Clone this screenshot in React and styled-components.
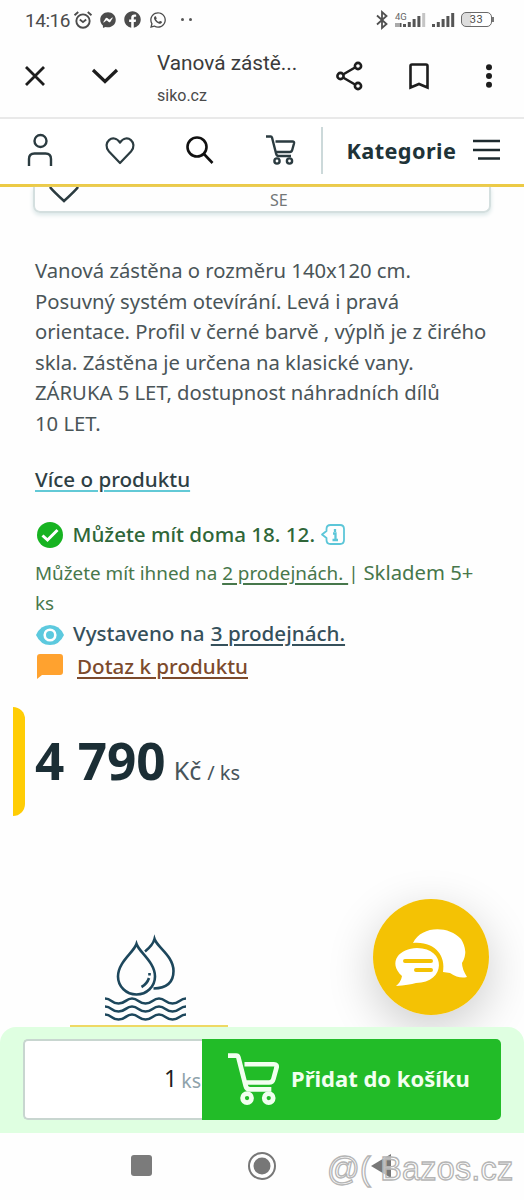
import styled, { createGlobalStyle } from "styled-components";
import { FaFacebook, FaFacebookMessenger, FaWhatsapp } from "react-icons/fa";

const GlobalStyle = createGlobalStyle`
  * {
    box-sizing: border-box;
  }
  body {
    margin: 0;
    background: #fff;
    font-family: "Noto Sans", sans-serif;
  }
`;

const Page = styled.main`
  position: relative;
  display: flex;
  flex-direction: column;
  width: 524px;
  height: 1200px;
  overflow: hidden;
  background: #fefefe;
  > * {
    flex: none;
  }
`;

const Icon = styled.svg`
  display: block;
  flex: none;
  overflow: visible;
  fill: none;
  stroke: ${(p) => p.$color || "#2b3b40"};
  stroke-width: ${(p) => p.$stroke || 2.4};
  margin-left: ${(p) => p.$ml || 0}px;
`;

/* status bar */
const StatusBar = styled.header`
  display: flex;
  align-items: center;
  height: 39px;
  padding-left: 25px;
  color: #4c4c4c;
  font-family: Roboto, sans-serif;
`;

const Clock = styled.span`
  width: 49px;
  font-size: 19px;
  letter-spacing: -0.45px;
  line-height: 39px;
  padding-top: 1px;
`;

const AppIcons = styled.div`
  display: flex;
  align-items: center;
  gap: 8px;
  font-size: 17px;
`;

const Dots = styled.span`
  display: flex;
  gap: 5px;
  margin-left: 6px;
  &::before,
  &::after {
    content: "";
    width: 3px;
    height: 3px;
    border-radius: 50%;
    background: #555;
  }
`;

const StatusRight = styled.div`
  display: flex;
  align-items: center;
  margin-left: 184px;
`;

const Battery = styled.span`
  display: flex;
  align-items: center;
  margin-left: 6px;
  &::after {
    content: "";
    width: 2px;
    height: 5px;
    background: #777;
  }
`;

const BatteryBody = styled.span`
  width: 31px;
  height: 15px;
  border: 1.5px solid #6a6a6a;
  border-radius: 5px;
  background: linear-gradient(90deg, #ddd 30%, #fff 30%);
  font-size: 11px;
  line-height: 13px;
  text-align: center;
  letter-spacing: 0.5px;
`;

/* browser toolbar */
const BrowserBar = styled.nav`
  display: flex;
  align-items: center;
  height: 80px;
  padding: 0 0 4px 25px;
  border-bottom: 2px solid #e9e9e9;
  font-family: Roboto, sans-serif;
`;

const PageInfo = styled.div`
  flex: none;
  width: 141px;
  margin-left: 39px;
  padding-top: 4px;
  color: #3b3b3b;
  white-space: nowrap;
`;

const PageTitle = styled.div`
  font-size: 20.8px;
  line-height: 30px;
`;

const PageHost = styled.div`
  padding-top: 5px;
  font-size: 16px;
  line-height: 26px;
  color: #4a4a4a;
`;

/* shop header */
const ShopBar = styled.nav`
  display: flex;
  align-items: center;
  height: 68px;
  padding: 0 0 3px 27px;
  border-bottom: 3px solid #ecca45;
  background: #fff;
`;

const Divider = styled.span`
  flex: none;
  width: 1.5px;
  height: 47px;
  margin-left: 25px;
  background: #ccd9da;
`;

const MenuLabel = styled.span`
  flex: none;
  width: 150px;
  padding-left: 24px;
  color: #203338;
  font-size: 21.7px;
  font-weight: 700;
  letter-spacing: 0.4px;
`;

const Variant = styled.div`
  display: flex;
  height: 26px;
  margin: 0 33px;
  border: 2px solid #d4dfdf;
  border-top: 0;
  border-radius: 0 0 7px 7px;
  box-shadow: 0 2px 4px #d9e6e7;
  overflow: hidden;
`;

const VariantName = styled.span`
  margin-left: 192px;
  color: #727677;
  font-size: 16px;
  line-height: 26px;
`;

/* product */
const Product = styled.section`
  height: 470.6px;
  padding: 42px 0 0 35px;
`;

const Description = styled.p`
  margin: 0;
  color: #4a5558;
  font-size: 20.25px;
  line-height: 30.6px;
  white-space: nowrap;
`;

const MoreLink = styled.a`
  display: block;
  margin-top: 25px;
  color: #2e3f44;
  font-size: 20.6px;
  font-weight: 500;
  line-height: 30px;
  text-decoration: underline #62c9d6 2px;
  text-underline-offset: 3px;
`;

const InfoRow = styled.div`
  display: flex;
  align-items: center;
  height: 32px;
  margin-top: ${(p) => p.$mt || 0}px;
  color: ${(p) => p.$color};
  font-size: 20.6px;
  font-weight: 500;
  white-space: pre;
`;

const InfoText = styled.span`
  margin-left: ${(p) => p.$ml}px;
  padding-bottom: ${(p) => p.$lift || 0}px;
`;

const Link = styled.a`
  margin-left: ${(p) => p.$ml || 0}px;
  text-decoration: underline 1.5px;
  text-underline-offset: 3px;
`;

const Stock = styled.p`
  height: 61px;
  margin: 7px 0 0;
  color: #47774b;
  font-size: 18.85px;
  line-height: 30.5px;
  big {
    font-size: 20.3px;
    line-height: 1;
  }
`;

const PriceBox = styled.div`
  display: flex;
  align-items: baseline;
  width: 300px;
  height: 109px;
  margin: 23px 0 0 13px;
  color: #1b2e35;
  white-space: pre;
`;

const PriceMark = styled.span`
  align-self: stretch;
  width: 12px;
  margin-right: 10px;
  border-radius: 0 12px 12px 0;
  background: #ffcd05;
`;

const Amount = styled.strong`
  font-size: 51.3px;
  line-height: 107px;
`;

const Unit = styled.span`
  margin-left: ${(p) => p.$ml}px;
  font-size: ${(p) => p.$size}px;
  color: #48545a;
`;

const Feature = styled.div`
  width: 158px;
  height: 92px;
  margin: 119.4px 0 0 70px;
  padding: 2px 0 0 34px;
  border-bottom: 2px solid #eed964;
`;

/* bottom bars */
const BuyBar = styled.div`
  display: flex;
  height: 106px;
  padding: 12px 23px 13px;
  border-radius: 16px 16px 0 0;
  background: #dfffe1;
`;

const Quantity = styled.div`
  display: flex;
  justify-content: flex-end;
  align-items: center;
  width: 179px;
  padding: 0 1px 2px 0;
  border: 2px solid #c8d6d0;
  border-right: 0;
  border-radius: 5px 0 0 5px;
  background: #fff;
  color: #1f1f1f;
  font-size: 23px;
  span {
    margin-left: 4px;
    padding-top: 4px;
    color: #8fa3ab;
    font-size: 19.5px;
  }
`;

const BuyButton = styled.button`
  display: flex;
  align-items: center;
  width: 299px;
  padding: 0 0 0 26px;
  border: 0;
  border-radius: 0 5px 5px 0;
  background: #22bc28;
  color: #f2fff0;
  font: 700 22px "Noto Sans", sans-serif;
  white-space: nowrap;
  span {
    margin-left: 11px;
    padding-bottom: 2px;
  }
`;

const SystemNav = styled.nav`
  display: flex;
  align-items: center;
  height: 67px;
  padding: 0 0 1px 131px;
  background: #fefefe;
`;

const ChatButton = styled.button`
  position: absolute;
  left: 373px;
  top: 899px;
  width: 116px;
  height: 116px;
  padding: 0;
  border: 0;
  border-radius: 50%;
  background: #f4c204;
`;

const ChatShadow = styled.div`
  position: absolute;
  left: 373px;
  top: 899px;
  width: 116px;
  height: 116px;
  border-radius: 50%;
  box-shadow: 0 14px 48px rgba(0, 0, 0, 0.2);
`;

const Bottom = styled.div`
  position: relative;
`;

const Watermark = styled.span`
  position: absolute;
  left: 327px;
  top: 1151px;
  color: rgba(255, 255, 255, 0.55);
  font: 32.3px/36px "Liberation Sans", sans-serif;
  letter-spacing: 0.25px;
  white-space: nowrap;
  -webkit-text-stroke: 1.3px #b5b5b5;
`;

const Cart = ({ size, ...props }) => (
  <Icon width={size} height={size} viewBox="0 0 30 30" strokeLinejoin="round" {...props}>
    <path d="M0 1.500h4.700q1 0 1.300 1l4.200 16.500q.5 2 2.500 2H25M9.500 6.500h17q2 0 1.500 2l-1.800 6.500q-.5 2-2.500 2H10.500" />
    <circle cx="11" cy="26" r="2.600" />
    <circle cx="23.500" cy="26" r="2.600" />
  </Icon>
);

const Signal = ({ ml, weak }) => (
  <Icon width="23" height="15" $ml={ml} $stroke="3">
    {[3, 5, 8, 11, 14].map((h, i) => (
      <path key={h} d={`M${1.5 + i * 4.8} 15v-${h}`} stroke={weak && i === 4 ? "#c5c5c5" : "#555"} />
    ))}
  </Icon>
);

const App = () => {
  return (
    <>
      <GlobalStyle />
      <Page>
        <StatusBar>
          <Clock>14:16</Clock>
          <AppIcons>
            <Icon width="18" height="18" viewBox="0 0 17 17" $color="#4c4c4c" $stroke="1.8">
              <circle cx="8.500" cy="9.500" r="6.300" />
              <path d="M.5 4 4 1M16.500 4 13 1M5.500 8l3 2.500 3-2.500" />
            </Icon>
            <FaFacebookMessenger size={16} />
            <FaFacebook />
            <FaWhatsapp size={18} />
            <Dots />
          </AppIcons>
          <StatusRight>
            <Icon width="12" height="18" $color="#505050" $stroke="1.8">
              <path d="M1 4.500 10.500 13 6 17V1l4.500 4L1 13.500" />
            </Icon>
            <Icon width="14" height="18" $ml="7" $stroke="0">
              <text x="0" y="9" fill="#666" fontSize="9.500" fontFamily="Roboto">4G</text>
              <path d="M0 12h4v4H0z" fill="#aaa" />
              <path d="M4.500 12h2v4h-2z" fill="#555" />
            </Icon>
            <Signal ml={-6} weak />
            <Signal ml={6} />
            <Battery>
              <BatteryBody>33</BatteryBody>
            </Battery>
          </StatusRight>
        </StatusBar>

        <BrowserBar>
          <Icon width="20" height="20" $color="#1d1d1d" $stroke="2.800">
            <path d="M1 1l18 18M19 1 1 19" />
          </Icon>
          <Icon width="26" height="14" $ml="47" $color="#1d1d1d" $stroke="3.2">
            <path d="M1 1l12 11.500L25 1" />
          </Icon>
          <PageInfo>
            <PageTitle>Vanová zástě...</PageTitle>
            <PageHost>siko.cz</PageHost>
          </PageInfo>
          <Icon width="26" height="28" $ml="38" $color="#1d1d1d" $stroke="2.6">
            <path d="M7 12.500 19 5.500M7 15.500l12 7" />
            <circle cx="4.500" cy="14" r="3.100" />
            <circle cx="22" cy="4" r="3.100" />
            <circle cx="22" cy="24" r="3.100" />
          </Icon>
          <Icon width="20" height="26" $ml="47" $color="#1d1d1d" $stroke="2.600">
            <path d="M1.500 24.500V3q0-1.500 1.500-1.500h14q1.500 0 1.500 1.500v21.500L10 21z" />
          </Icon>
          <Icon width="6" height="24" $ml="57" $stroke="0">
            <g fill="#1d1d1d">
              <circle cx="3" cy="3.200" r="3" />
              <circle cx="3" cy="12" r="3" />
              <circle cx="3" cy="20.800" r="3" />
            </g>
          </Icon>
        </BrowserBar>

        <ShopBar>
          <Icon width="26" height="32" strokeLinejoin="round">
            <circle cx="13.500" cy="7" r="6" />
            <path d="M2 32v-7q0-5.500 5.500-5.500h11q5.500 0 5.500 5.500v7" />
          </Icon>
          <Icon width="30" height="27" $ml="52" $stroke="2.200" strokeLinejoin="round">
            <path d="M15 26 4 14.500C-3.500 6 8-4.500 15 5.500 22-4.500 33.500 6 26 14.500z" />
          </Icon>
          <Icon width="28" height="28" $ml="51" $color="#111" $stroke="2.6">
            <circle cx="11" cy="11" r="9.500" />
            <path d="M17.500 17.500 26.500 27" />
          </Icon>
          <Cart size={30} $ml={52} />
          <Divider />
          <MenuLabel>Kategorie</MenuLabel>
          <Icon width="27" height="22" $stroke="2.400" $color="#1d2a2e">
            <path d="M0 2h27M0 11h27M5 19.500h22" />
          </Icon>
        </ShopBar>

        <Variant>
          <Icon width="28" height="16" $ml="15" $stroke="2.500">
            <path d="M0 0q2 3 14 14Q26 3 28 0" />
          </Icon>
          <VariantName>SE</VariantName>
        </Variant>

        <Product>
          <Description>
            Vanová zástěna o rozměru 140x120 cm.
            <br />
            Posuvný systém otevírání. Levá i pravá
            <br />
            orientace. Profil v černé barvě , výplň je z čirého
            <br />
            skla. Zástěna je určena na klasické vany.
            <br />
            ZÁRUKA 5 LET, dostupnost náhradních dílů
            <br />
            10 LET.
          </Description>
          <MoreLink>Více o produktu</MoreLink>

          <InfoRow $mt={25} $color="#2f6638">
            <Icon width="26" height="26" $ml="2" $stroke="3" $color="#fff">
              <circle cx="13" cy="13" r="13" fill="#17b321" stroke="none" />
              <path d="M5.500 13.500l5 4.500L20.500 8" />
            </Icon>
            <InfoText $ml={9.5} $lift={2}>Můžete mít doma 18. 12.</InfoText>
            <Icon width="24" height="21" $ml="6" $stroke="1.800" $color="#5cc6d8">
              <path d="M5.500 7V5q0-4 4-4h9.500q4 0 4 4v11q0 4-4 4H9.500q-4 0-4-4v-2L1 10.500z" strokeLinejoin="round" />
              <path d="M14 5v3M12 9.500h2.500V16M11.500 16h5.500" strokeWidth="2.300" />
            </Icon>
          </InfoRow>
          <Stock>
            Můžete mít ihned na <Link>2 prodejnách. </Link>| <big>Skladem 5+</big>
            <br />
            ks
          </Stock>
          <InfoRow $color="#35505b">
            <Icon width="28" height="20" $ml="1" $stroke="0">
              <path d="M0 10Q4.500 0 14 0t14 10Q23.500 20 14 20T0 10z" fill="#5cc9de" />
              <circle cx="14" cy="10" r="5.300" fill="none" stroke="#fff" strokeWidth="2.600" />
            </Icon>
            <InfoText $ml={9} $lift={3}>
              Vystaveno na <Link $ml={1}>3 prodejnách.</Link>
            </InfoText>
          </InfoRow>
          <InfoRow $color="#7c4a2c">
            <Icon width="26" height="25" $ml="2" $stroke="0">
              <path d="M3 0h20q3 0 3 3v15q0 3-3 3H5l-5 4V3q0-3 3-3z" fill="#ffa22f" />
            </Icon>
            <InfoText $ml={14} $lift={2}>
              <Link>Dotaz k produktu</Link>
            </InfoText>
          </InfoRow>
        </Product>

        <PriceBox>
          <PriceMark />
          <Amount>4 790</Amount>
          <Unit $ml={8} $size={25}>Kč</Unit>
          <Unit $ml={6} $size={20}>/ ks</Unit>
        </PriceBox>

        <Feature>
          <Icon width="84" height="86" $color="#1d475c" $stroke="2.600">
            <path d="M32.500 7C30 15 14 25 14 39.500a18.500 18 0 0 0 37 0C51 25 35 15 32.500 7z" />
            <path d="M41 14.500Q49 8 50.500 2C53 10 69.500 19 69.500 34q0 17-20 17.500" />
            <path d="M37.500 50q5.500-3 7.500-9M45.500 36v2.500" />
            <path d="M1 61.500c7 0 6 5 13.500 5s7-5 13.500-5 6.500 5 13.500 5 7-5 13.500-5 6.500 5 13.500 5 7-5 13.500-5" />
            <path d="M1 69.500c7 0 6 5 13.500 5s7-5 13.500-5 6.500 5 13.500 5 7-5 13.500-5 6.500 5 13.500 5 7-5 13.500-5" />
            <path d="M1 77.500c7 0 6 5 13.500 5s7-5 13.500-5 6.500 5 13.500 5 7-5 13.500-5 6.500 5 13.500 5 7-5 13.500-5" />
          </Icon>
        </Feature>

        <ChatShadow />
        <Bottom>
          <BuyBar>
            <Quantity>
              1<span>ks</span>
            </Quantity>
            <BuyButton>
              <Cart size={52} $color="#f2fff0" $stroke="2.700" />
              <span>Přidat do košíku</span>
            </BuyButton>
          </BuyBar>
          <SystemNav>
            <Icon width="21" height="21" $stroke="0">
              <rect width="21" height="21" rx="3" fill="#7b7b7b" />
            </Icon>
            <Icon width="28" height="28" $ml="96" $color="#777" $stroke="2">
              <circle cx="14" cy="14" r="13" />
              <circle cx="14" cy="14" r="8.500" fill="#777" stroke="none" />
            </Icon>
            <Icon width="20" height="24" $ml="95" $stroke="0">
              <path d="M20 0v24L0 12z" fill="#777" />
            </Icon>
          </SystemNav>
        </Bottom>

        <ChatButton>
          <Icon width="116" height="116" $stroke="0">
            <path d="M40 44C48 27 75 26 88 40q8 13 1 24 0 6 5 14-8 2-17-4l-7-1C73 57 62 42 40 44z" fill="#fff" />
            <path d="M29 77C14 63 27 49 44 49c30 0 29 35-1 35q-7 2-20 3 5-4 6-10z" fill="#fff" />
            <path d="M32 62h26M43 71h15" stroke="#f4c204" strokeWidth="4" strokeLinecap="round" />
          </Icon>
        </ChatButton>
        <Watermark>@( Bazos.cz</Watermark>
      </Page>
    </>
  );
};

export default App;
